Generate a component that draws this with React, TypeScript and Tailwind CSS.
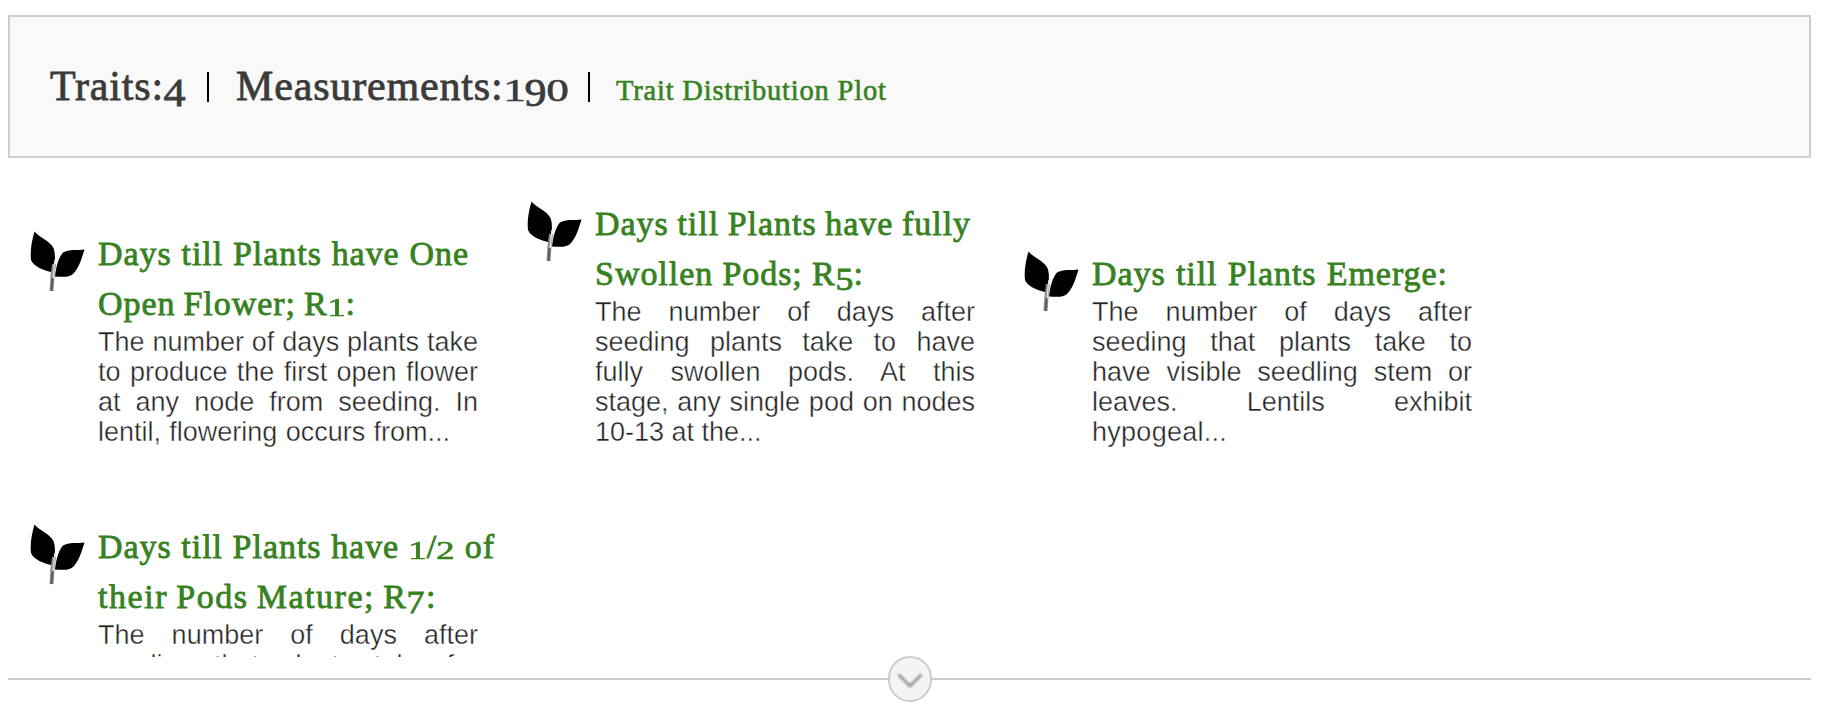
import type { ReactNode } from "react";

const serif = "font-['Georgia','Liberation_Serif',serif]";

/* Old-style figures: 0-2 sit at x-height, 3-5, 7 and 9 hang below the baseline. */
function Figures({ children }: { children: string }) {
  return (
    <>
      {children.split("").map((c, i) => {
        if ("012".includes(c))
          return (
            <span key={i} className="inline-block origin-[50%_79%] scale-y-[0.76] scale-x-[1.08]">
              {c}
            </span>
          );
        if ("34579".includes(c))
          return (
            <span key={i} className="inline-block origin-[50%_79%] translate-y-[0.15em] scale-x-[1.05] scale-y-[0.95]">
              {c}
            </span>
          );
        return c;
      })}
    </>
  );
}

function Line({ width, children }: { width: string; children: ReactNode }) {
  return (
    <span className={`block whitespace-nowrap text-justify [text-align-last:justify] ${width}`}>{children}</span>
  );
}

function Leaf() {
  return (
    <svg viewBox="0 0 56 62" className="mt-px ml-px h-[62px] w-[56px] shrink-0 blur-[0.7px]">
      <path d="M4.500 1.500C10 8 19 10 23.500 18C26 25 25 34 22.500 42.500C13 40 4 37 1 30C0 20 2 10 4.500 1.500Z" fill="#000" />
      <path d="M54.500 19.500C52 27 50 36 44 43C39 48.500 32 46.500 25 46.500C26 38 28 28 33 22.500C39 19 47 20.500 54.500 19.500Z" fill="#000" />
      <path d="M24 34L22.500 46L21.500 61" fill="none" stroke="#888" strokeWidth="4" />
      <path d="M25 30Q24 38 23 49" fill="none" stroke="#ddd" strokeWidth="1.500" />
      <path d="M22.500 48L21.500 61" fill="none" stroke="#555" strokeWidth="1.500" />
    </svg>
  );
}

type Row = [string, string];

const traits: { title: Row[]; body: Row[] }[] = [
  {
    title: [
      ["Days till Plants have One", "w-[371px]"],
      ["Open Flower; R1:", "w-[258px]"],
    ],
    body: [
      ["The number of days plants take", "w-[380px]"],
      ["to produce the first open flower", "w-[380px]"],
      ["at any node from seeding. In", "w-[380px]"],
      ["lentil, flowering occurs from...", "w-[352px]"],
    ],
  },
  {
    title: [
      ["Days till Plants have fully", "w-[376px]"],
      ["Swollen Pods; R5:", "w-[269px]"],
    ],
    body: [
      ["The number of days after", "w-[380px]"],
      ["seeding plants take to have", "w-[380px]"],
      ["fully swollen pods. At this", "w-[380px]"],
      ["stage, any single pod on nodes", "w-[380px]"],
      ["10-13 at the...", "w-[165px]"],
    ],
  },
  {
    title: [["Days till Plants Emerge:", "w-[356px]"]],
    body: [
      ["The number of days after", "w-[380px]"],
      ["seeding that plants take to", "w-[380px]"],
      ["have visible seedling stem or", "w-[380px]"],
      ["leaves. Lentils exhibit", "w-[380px]"],
      ["hypogeal...", "w-[135px] tracking-[0.01em]"],
    ],
  },
  {
    title: [
      ["Days till Plants have 1/2 of", "w-[397px]"],
      ["their Pods Mature; R7:", "w-[339px] tracking-[0.045em]"],
    ],
    body: [
      ["The number of days after", "w-[380px]"],
      ["seeding that plants take for", "w-[380px]"],
    ],
  },
];

function Trait({ title, body }: { title: Row[]; body: Row[] }) {
  return (
    <article className="flex w-[497px] items-start">
      <Leaf />
      <div className="ml-[12px]">
        <h2
          className={`${serif} text-[34px] leading-[50px] tracking-[0.028em] [word-spacing:-0.06em] text-[#37821f] [-webkit-text-stroke:0.8px_#37821f]`}
        >
          {title.map(([text, width]) => (
            <Line key={text} width={width}>
              <Figures>{text}</Figures>
            </Line>
          ))}
        </h2>
        <p className="-mt-[2px] mb-[2px] font-['Liberation_Sans',sans-serif] text-[27px] leading-[30px] text-[#222] [-webkit-text-stroke:0.4px_#fff]">
          {body.map(([text, width]) => (
            <Line key={text} width={width}>
              {text}
            </Line>
          ))}
        </p>
      </div>
    </article>
  );
}

export default function App() {
  return (
    <main className="h-[708px] w-[1826px] overflow-hidden bg-white pt-[15px] pl-2">
      <header
        className={`${serif} flex h-[143px] w-[1803px] items-baseline border-2 border-[#cecece] bg-[#f9f9f9] pt-[39px] pl-[40px] text-[42px] leading-[60px] tracking-[0.02em] text-[#3b3b3b] [-webkit-text-stroke:0.8px_#3b3b3b]`}
      >
        <span className="w-[157px]">
          Traits:<Figures>4</Figures>
        </span>
        <span className="h-[30px] w-[2px] self-start mt-[16px] bg-black" />
        <span className="ml-[27px] w-[352px]">
          Measurements:<Figures>190</Figures>
        </span>
        <span className="h-[30px] w-[2px] self-start mt-[16px] bg-black" />
        <a className="ml-[26px] text-[28.500px] tracking-[0.028em] text-[#37821f] [-webkit-text-stroke:0.6px_#37821f]">
          Trait Distribution Plot
        </a>
      </header>
      <section className="mt-[21px] ml-[21px] flex h-[478px] flex-col gap-[73px] overflow-hidden">
        <div className="flex h-[270px] shrink-0 items-end">
          {traits.slice(0, 3).map((t) => (
            <Trait key={t.title[0][0]} {...t} />
          ))}
        </div>
        <div className="flex shrink-0">
          <Trait {...traits[3]} />
        </div>
      </section>
      <footer className="-mt-px flex h-[46px] w-[1803px] items-center">
        <span className="h-[2px] w-[880px] bg-[#ccc]" />
        <button className="flex h-[46px] w-[44px] items-center justify-center rounded-full border-2 border-[#ccc] bg-[#f4f4f4]">
          <svg viewBox="0 0 28 18" className="mt-[3px] h-[18px] w-[28px] blur-[0.8px]">
            <path d="M2.500 2.500L14 14L25.500 2.500" fill="none" stroke="#999" strokeWidth="3" />
          </svg>
        </button>
        <span className="h-[2px] flex-1 bg-[#ccc]" />
      </footer>
    </main>
  );
}
